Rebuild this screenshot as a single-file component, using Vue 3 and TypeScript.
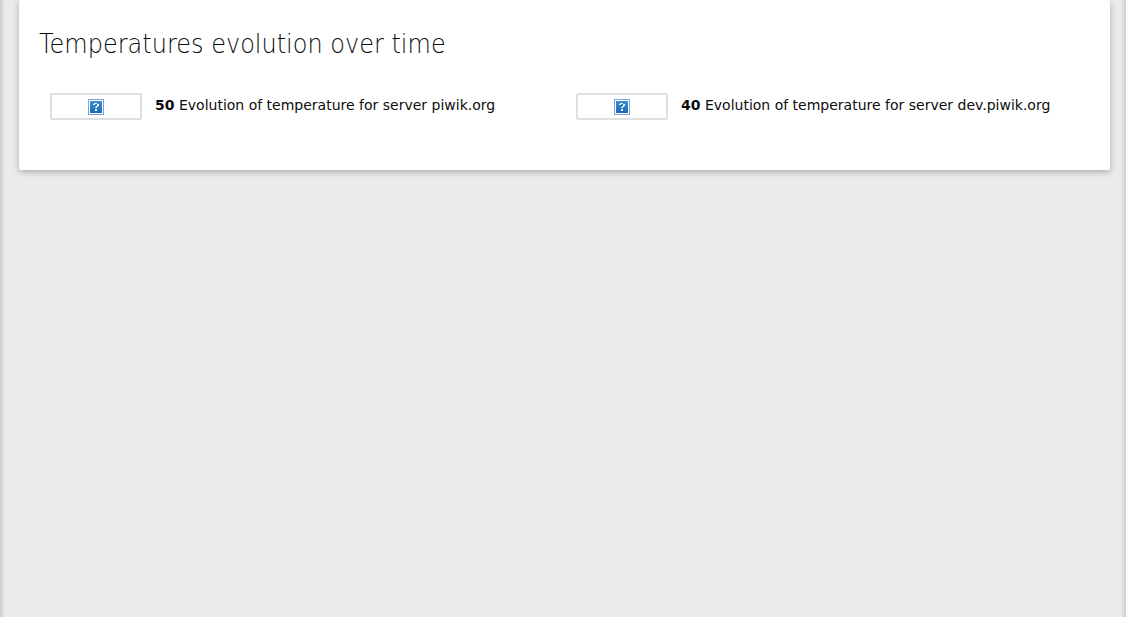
<script setup lang="ts">
interface Sparkline { value: number; label: string }
const rows: Sparkline[] = [
  { value: 50, label: 'Evolution of temperature for server piwik.org' },
  { value: 40, label: 'Evolution of temperature for server dev.piwik.org' },
]
</script>

<template>
  <div class="page">
    <main class="card">
      <h2>Temperatures evolution over time</h2>
      <div class="sparklines">
        <div v-for="row in rows" :key="row.value" class="sparkline">
          <span class="frame">
            <svg class="missing" width="16" height="16" viewBox="0 0 16 16" shape-rendering="crispEdges">
              <defs>
                <linearGradient id="tile" x1="0" y1="0" x2="0" y2="1">
                  <stop offset="0" stop-color="#3c8fd0" />
                  <stop offset="1" stop-color="#1c6cb3" />
                </linearGradient>
              </defs>
              <rect width="16" height="16" fill="#7ba3d3" />
              <rect x="1" y="1" width="14" height="14" fill="#fff" />
              <rect x="2" y="2" width="12" height="12" fill="url(#tile)" />
              <path d="M6 4H9V5H6ZM5 5H7V6H5ZM9 5H11V7H9ZM8 7H10V8H8ZM7 8H9V9H7ZM7 10H9V12H7Z" fill="#e8f3fa" />
            </svg>
          </span>
          <span class="text"><strong>{{ row.value }}</strong> {{ row.label }}</span>
        </div>
      </div>
    </main>
  </div>
</template>

<style>
body { background: #ebebeb; }
</style>
<style scoped>
.page {
  box-sizing: border-box;
  height: 617px;
  padding: 0 16px 0 19px;
  overflow: hidden;
  background:
    linear-gradient(to right, #cecece, #ebebeb) left / 5px 100% no-repeat,
    linear-gradient(to left, #cecece, #ebebeb) right / 5px 100% no-repeat,
    #ebebeb;
  font-family: "DejaVu Sans", sans-serif;
  color: #0d0d0d;
}
.card {
  box-sizing: border-box;
  height: 170px;
  padding: 28px 20px 0;
  background: #fff;
  border-radius: 2px;
  box-shadow: 0 2px 5px rgba(0,0,0,.16), 0 2px 10px rgba(0,0,0,.12);
}
h2 {
  margin: 0;
  font-size: 24px;
  font-weight: 200;
  line-height: 31px;
  white-space: nowrap;
  transform: scaleY(1.07);
  transform-origin: 0 0;
}
.sparklines { display: grid; grid-template-columns: 526px 1fr; padding: 34px 0 0 11px; }
.sparkline { display: flex; align-items: flex-start; }
.frame {
  box-sizing: border-box;
  display: flex;
  justify-content: center;
  width: 92px;
  height: 27px;
  padding-top: 4px;
  border: 2px solid #dfdfdf;
  border-radius: 2px;
}
.text { margin-left: 13px; padding-top: 1px; font-size: 14px; line-height: 22px; white-space: nowrap; }
</style>
